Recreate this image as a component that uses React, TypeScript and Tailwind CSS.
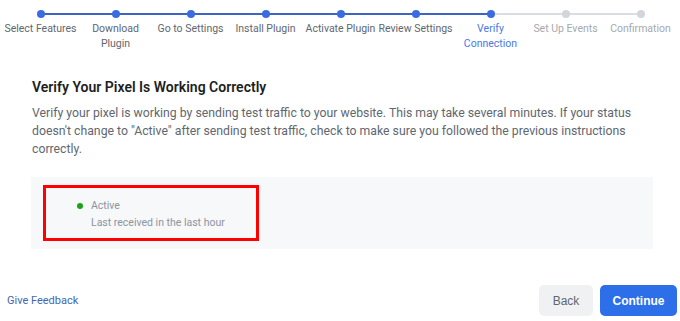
const STEPS = [
  'Select Features',
  'Download Plugin',
  'Go to Settings',
  'Install Plugin',
  'Activate Plugin',
  'Review Settings',
  'Verify Connection',
  'Set Up Events',
  'Confirmation',
];

const CURRENT = 6;

// labels that stay on one line in the picture
const ONE_LINE = ['Select Features', 'Go to Settings', 'Install Plugin', 'Activate Plugin', 'Review Settings', 'Set Up Events'];

const Stepper = () => {
  return (
    <div className="flex pl-[3px]">
      {STEPS.map((label, i) => {
        const done = i <= CURRENT;
        const leftBlue = i <= CURRENT;
        const rightBlue = i < CURRENT;
        return (
          <div key={label} className="w-[75px] flex flex-col items-center">
            <div className="relative w-full h-[28px] flex items-center justify-center">
              {i > 0 && (
                <div
                  className={`absolute left-0 right-1/2 top-[13px] h-[2px] ${
                    leftBlue ? 'bg-[#3d64c4]' : 'bg-[#dadde1]'
                  }`}
                />
              )}
              {i < STEPS.length - 1 && (
                <div
                  className={`absolute left-1/2 right-0 top-[13px] h-[2px] ${
                    rightBlue ? 'bg-[#3d64c4]' : 'bg-[#dadde1]'
                  }`}
                />
              )}
              <div
                className={`relative w-[8px] h-[8px] rounded-full ${
                  done ? 'bg-[#3b6be0]' : 'bg-[#d2d5d9]'
                }`}
              />
            </div>
            <div
              className={`-mt-[7px] text-center text-[10.5px] leading-[15px] ${
                i === CURRENT ? 'text-[#4a78e6]' : i > CURRENT ? 'text-[#a5a9ae]' : 'text-[#606770]'
              }`}
            >
              {ONE_LINE.includes(label) ? <span className="whitespace-nowrap">{label}</span> : label}
            </div>
          </div>
        );
      })}
    </div>
  );
};

export default function App() {
  return (
    <div className="w-[680px] h-[321px] bg-white font-['Roboto',sans-serif] flex flex-col overflow-hidden">
      <Stepper />

      <div className="pl-[32px] pr-[27px] mt-[27px]">
        <h2 className="text-[14px] leading-[18px] font-semibold text-[#1c1e21]">
          Verify Your Pixel Is Working Correctly
        </h2>
        <p className="mt-[8px] text-[12.25px] leading-[18px] text-[#606770]">
          Verify your pixel is working by sending test traffic to your website. This may take several minutes. If your status doesn't change to "Active" after sending test traffic, check to make sure you followed the previous instructions correctly.
        </p>

        <div className="mt-[19px] -ml-px bg-[#f7f8fa] h-[72px] pt-[8px] pl-[12px]">
          <div className="w-[216px] h-[56px] border-[3px] border-[#ff0000] flex pl-[31px] pt-[9px]">
            <div className="w-[6px] h-[6px] rounded-full bg-[#1aa31a] mt-[6px]" />
            <div className="ml-[8px] text-[10.5px] leading-[17px] text-[#8d949e]">
              <div>Active</div>
              <div>Last received in the last hour</div>
            </div>
          </div>
        </div>
      </div>

      <div className="mt-auto mb-[5px] flex items-center justify-between pl-[7px] pr-[3px]">
        <a className="text-[11px] text-[#4267b2] mt-[1px]">Give Feedback</a>
        <div className="flex gap-[7px]">
          <button className="w-[54px] h-[31px] rounded-[5px] bg-[#f0f1f2] text-[12px] text-[#606770] font-['Liberation_Sans',sans-serif]">
            Back
          </button>
          <button className="w-[77px] h-[31px] rounded-[5px] bg-[#2d6fe8] text-[12px] font-bold text-white font-['Liberation_Sans',sans-serif]">
            Continue
          </button>
        </div>
      </div>
    </div>
  );
}
